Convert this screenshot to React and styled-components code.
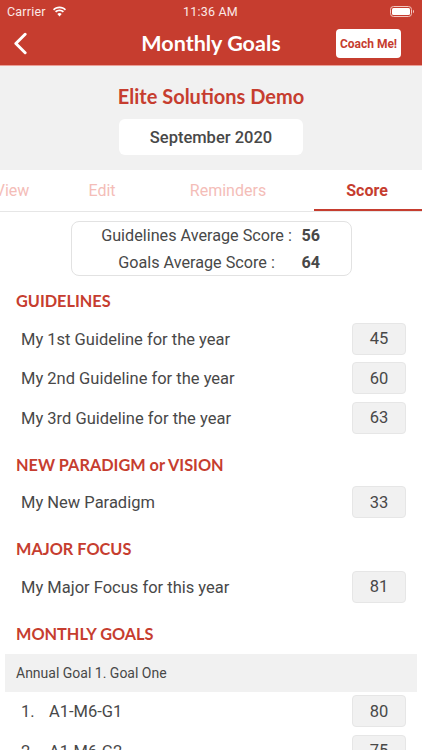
import React from 'react'
import styled, { createGlobalStyle } from 'styled-components'

const Global = createGlobalStyle`
  html, body { margin:0; padding:0; background:#fff; }
  body { font-family:Roboto, "Liberation Sans", sans-serif; color:#484848; }
`

const Page = styled.div`
  width:422px;
  height:750px;
  overflow:hidden;
  background:#fff;
`

const Header = styled.header`
  background:#c63d2f;
  height:65px;
  border-bottom:1px solid #ea9f97;
  color:#fff;
`

const StatusBar = styled.div`
  height:22px;
  display:grid;
  grid-template-columns:1fr auto 1fr;
  align-items:center;
  padding:0 8px 0 7px;
  font-size:12.5px;
  letter-spacing:.2px;
  color:#fbe9e7;
`

const Carrier = styled.div`
  display:flex;
  align-items:center;
  gap:6px;
`

const Battery = styled.div`
  justify-self:end;
  display:flex;
  align-items:center;
`

const NavBar = styled.div`
  height:43px;
  display:grid;
  grid-template-columns:1fr auto 1fr;
  align-items:center;
  padding:0 14px;
`

const Title = styled.h1`
  margin:0 0 2px;
  font:700 21.5px Lato, "Open Sans", sans-serif;
`

const CoachButton = styled.button`
  justify-self:end;
  width:65px;
  height:29px;
  margin-right:7px;
  padding:0;
  border:none;
  border-radius:4px;
  background:#fff;
  color:#c63d2f;
  font:700 12px Roboto, sans-serif;
`

const Company = styled.section`
  height:104px;
  background:#f1f1f1;
  display:flex;
  flex-direction:column;
  align-items:center;
  padding-top:17px;
  box-sizing:border-box;
`

const CompanyName = styled.h2`
  margin:0 0 10px;
  font:700 20px/26px Lato, sans-serif;
  color:#c63d2f;
`

const DatePill = styled.div`
  width:184px;
  height:36px;
  border-radius:6px;
  background:#fff;
  display:flex;
  align-items:center;
  justify-content:center;
  font-size:16.5px;
  font-weight:500;
`

const Tabs = styled.nav`
  height:41px;
  display:flex;
  justify-content:flex-end;
  overflow:hidden;
  border-bottom:1px solid #e6e6e6;
`

const Tab = styled.div`
  flex:0 0 ${p => p.$w}px;
  display:flex;
  align-items:center;
  justify-content:center;
  padding:1px ${p => (p.$active ? 2 : 0)}px 0 0;
  font-size:16px;
  box-sizing:border-box;
  color:${p => (p.$active ? '#c63d2f' : '#f4bdb8')};
  font-weight:${p => (p.$active ? 700 : 400)};
  border-bottom:2px solid ${p => (p.$active ? '#c63d2f' : 'transparent')};
`

const ScoreCard = styled.div`
  width:281px;
  height:55px;
  margin:9px auto 0;
  padding-left:20px;
  box-sizing:border-box;
  border:1px solid #e2e2e2;
  border-radius:8px;
  display:grid;
  grid-template-columns:210px 30px;
  grid-auto-rows:27px;
  align-items:center;
  font-size:16.2px;
`

const AvgLabel = styled.div`
  text-align:center;
  white-space:nowrap;
`

const AvgValue = styled.div`
  font-weight:700;
`

const Section = styled.section`
  & + & {
    margin-top:2px;
  }
`

const SectionTitle = styled.h3`
  margin:0;
  height:43px;
  padding:15px 0 0 16px;
  box-sizing:border-box;
  font:700 16.3px/20px Lato, sans-serif;
  color:#c63d2f;
`

const Row = styled.div`
  height:39.5px;
  display:flex;
  align-items:center;
  justify-content:space-between;
  padding:0 16px 0 21px;
  font-size:16.5px;
`

const RowLabel = styled.div`
  display:flex;
  padding-top:1px;
`

const RowNumber = styled.span`
  width:28px;
`

const ScoreBox = styled.div`
  width:54px;
  height:32px;
  box-sizing:border-box;
  border:1px solid #e6e6e6;
  border-radius:4px;
  background:#f1f1f1;
  display:flex;
  align-items:center;
  justify-content:center;
`

const GoalBand = styled.div`
  margin:2px 5px 0;
  height:38px;
  padding-left:11px;
  display:flex;
  align-items:center;
  background:#f1f1f1;
  font-size:14px;
`

const sections = [
  {
    title: 'GUIDELINES',
    rows: [
      ['My 1st Guideline for the year', 45],
      ['My 2nd Guideline for the year', 60],
      ['My 3rd Guideline for the year', 63],
    ],
  },
  { title: 'NEW PARADIGM or VISION', rows: [['My New Paradigm', 33]] },
  { title: 'MAJOR FOCUS', rows: [['My Major Focus for this year', 81]] },
]

const goals = [
  ['A1-M6-G1', 80],
  ['A1-M6-G2', 75],
]

export default function App() {
  return (
    <Page>
      <Global />
      <Header>
        <StatusBar>
          <Carrier>
            Carrier
            <svg width="15" height="11" viewBox="0 0 15 11" fill="#fff">
              <path d="M7.5 2.3c2.1 0 4 .8 5.4 2.2l1.1-1.2C12.3 1.6 10 .6 7.5.6S2.7 1.6 1 3.3l1.1 1.2c1.4-1.4 3.3-2.2 5.4-2.2z" />
              <path d="M7.5 5.2c1.3 0 2.4.5 3.3 1.3L12 5.3c-1.2-1.1-2.8-1.8-4.5-1.8S4.200 4.200 3 5.300l1.200 1.200c.9-.8 2-1.300 3.300-1.300z" />
              <path d="M7.500 10.400l2.200-2.400c-.6-.5-1.400-.9-2.200-.9s-1.600.4-2.200.9z" />
            </svg>
          </Carrier>
          <span>11:36 AM</span>
          <Battery>
            <svg width="24" height="11" viewBox="0 0 24 11">
              <rect x=".5" y=".5" width="21" height="10" rx="3" fill="none" stroke="#f3c6c1" />
              <rect x="2" y="2" width="18" height="7" rx="1.500" fill="#fff" />
              <path d="M23 3.800c.6.200 1 .9 1 1.700s-.4 1.500-1 1.700z" fill="#f3c6c1" />
            </svg>
          </Battery>
        </StatusBar>
        <NavBar>
          <svg width="13" height="23" viewBox="0 0 14 24" fill="none" stroke="#fff" strokeWidth="3.200" strokeLinecap="round" strokeLinejoin="round">
            <path d="M12 2 2 12l10 10" />
          </svg>
          <Title>Monthly Goals</Title>
          <CoachButton>Coach Me!</CoachButton>
        </NavBar>
      </Header>
      <Company>
        <CompanyName>Elite Solutions Demo</CompanyName>
        <DatePill>September 2020</DatePill>
      </Company>
      <Tabs>
        <Tab $w={100}>View</Tab>
        <Tab $w={80}>Edit</Tab>
        <Tab $w={172}>Reminders</Tab>
        <Tab $w={108} $active>Score</Tab>
      </Tabs>
      <ScoreCard>
        <AvgLabel>Guidelines Average Score :</AvgLabel>
        <AvgValue>56</AvgValue>
        <AvgLabel>Goals Average Score :</AvgLabel>
        <AvgValue>64</AvgValue>
      </ScoreCard>
      {sections.map(section => (
        <Section key={section.title}>
          <SectionTitle>{section.title}</SectionTitle>
          {section.rows.map(([label, score]) => (
            <Row key={label}>
              <RowLabel>{label}</RowLabel>
              <ScoreBox>{score}</ScoreBox>
            </Row>
          ))}
        </Section>
      ))}
      <Section>
        <SectionTitle>MONTHLY GOALS</SectionTitle>
        <GoalBand>Annual Goal 1. Goal One</GoalBand>
        {goals.map(([label, score], i) => (
          <Row key={label}>
            <RowLabel>
              <RowNumber>{i + 1}.</RowNumber>
              {label}
            </RowLabel>
            <ScoreBox>{score}</ScoreBox>
          </Row>
        ))}
      </Section>
    </Page>
  )
}
